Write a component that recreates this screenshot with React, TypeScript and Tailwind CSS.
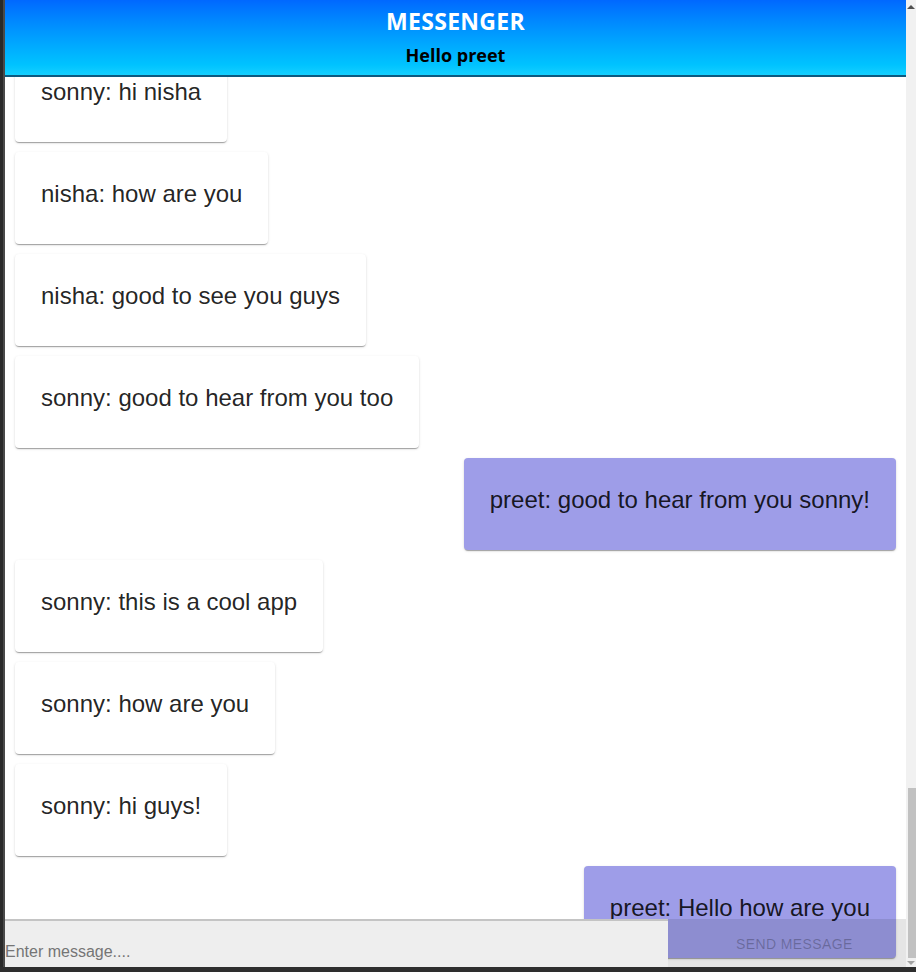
import React from 'react';

type Msg = { user: string; text: string };

const MESSAGES: Msg[] = [
  { user: 'sonny', text: 'hi nisha' },
  { user: 'nisha', text: 'how are you' },
  { user: 'nisha', text: 'good to see you guys' },
  { user: 'sonny', text: 'good to hear from you too' },
  { user: 'preet', text: 'good to hear from you sonny!' },
  { user: 'sonny', text: 'this is a cool app' },
  { user: 'sonny', text: 'how are you' },
  { user: 'sonny', text: 'hi guys!' },
  { user: 'preet', text: 'Hello how are you' },
];

const ME = 'preet';

const Bubble: React.FC<{ msg: Msg }> = ({ msg }) => {
  const mine = msg.user === ME;
  return (
    <div
      className={`shrink-0 rounded-[4px] px-[26px] pt-[26px] pb-[34px] shadow-[0_2px_1px_-1px_rgba(0,0,0,0.2),0_1px_1px_0_rgba(0,0,0,0.14),0_1px_3px_0_rgba(0,0,0,0.12)] ${
        mine ? 'self-end bg-[#9e9de8]' : 'self-start bg-white'
      }`}
    >
      <p className="text-[24px] leading-[32px] text-black/[0.87] whitespace-nowrap">
        {msg.user}: {msg.text}
      </p>
    </div>
  );
};

export default function App() {
  return (
    <div className="flex h-[972px] w-[916px] flex-col overflow-hidden bg-[#2e2e2e] font-['Liberation_Sans',Arial,sans-serif]">
      <div className="flex min-h-0 flex-1">
        {/* left window edge */}
        <div className="w-[5px] shrink-0 border-r-2 border-[#4a4a4a] bg-[#2a2a2a]" />

        <div className="relative flex min-w-0 flex-1 flex-col bg-white">
          <header className="z-10 flex h-[77px] shrink-0 flex-col items-center border-b-2 border-[#0d5a80] bg-gradient-to-b from-[#0068ff] to-[#14d0ff] font-['Open_Sans',sans-serif]">
            <h1 className="mt-[6px] text-[23px] font-bold leading-[30px] tracking-[0.3px] text-white">MESSENGER</h1>
            <h2 className="mt-[7px] text-[18px] font-bold leading-[24px] text-black">Hello preet</h2>
          </header>

          <div className="flex min-h-0 flex-1 flex-col justify-end gap-[10px] overflow-hidden px-[10px] pb-[9px]">
            {MESSAGES.map((m, i) => (
              <Bubble key={i} msg={m} />
            ))}
          </div>

          {/* fixed message form over the list */}
          <form className="absolute bottom-0 left-0 right-0 flex h-[48px]">
            <input
              className="h-full min-w-0 flex-1 border-t-2 border-[#c4c4c4] bg-[#eeeeee] pt-[16px] text-[16px] text-black outline-none placeholder:text-[#757575]"
              placeholder="Enter message...."
            />
            <div className="flex w-[238px] shrink-0 bg-black/10 pl-[68px] pt-[17px]">
              <button
                type="button"
                disabled
                className="h-fit text-[14px] font-medium uppercase leading-[16px] tracking-[0.4px] text-black/25"
              >
                Send message
              </button>
            </div>
          </form>
        </div>

        {/* scrollbar */}
        <div className="flex w-[10px] shrink-0 flex-col items-center bg-[#f1f1f1]">
          <div className="mt-[5px] h-0 w-0 border-x-[4px] border-b-[4px] border-x-transparent border-b-[#505050]" />
          <div className="mt-[779px] h-[170px] w-[8px] self-end bg-[#c1c1c1]" />
          <div className="mt-[3px] h-0 w-0 border-x-[4px] border-t-[4px] border-x-transparent border-t-[#a3a3a3]" />
        </div>
      </div>
      <div className="h-[5px] shrink-0 bg-[#2e2e2e]" />
    </div>
  );
}
